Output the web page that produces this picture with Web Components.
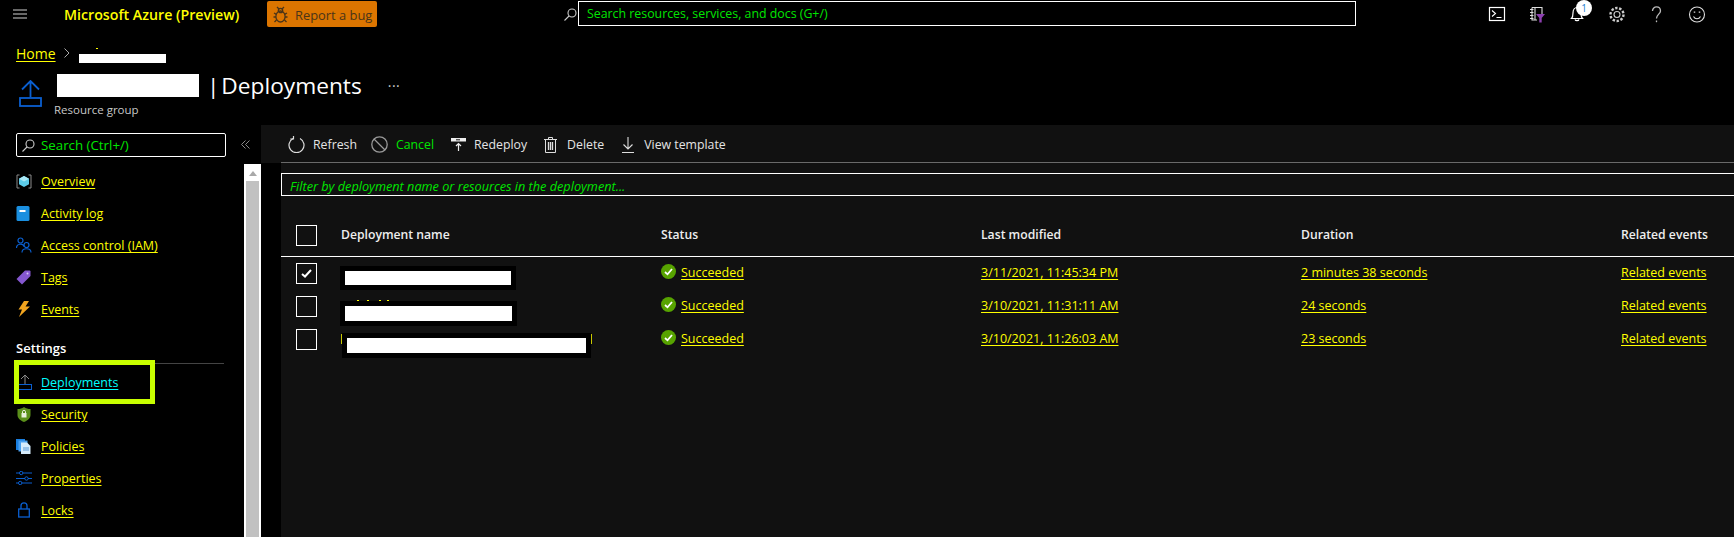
<!doctype html>
<html lang="en">
<meta charset="utf-8">
<title>Deployments</title>
<style>
    html, body { margin: 0; height: 100%; background: #000; overflow: hidden; }
    body { font: 12.5px "Open Sans", "Noto Sans", sans-serif; color: #fff; }
    svg { flex: none; }
</style>

<template id="az-link-template">
    <style>
        :host { display: inline; }
        a { color: #ff0; text-decoration: underline; text-underline-offset: 2px; cursor: pointer; }
        :host([current]) a { color: #0ff; }
    </style>
    <a><slot></slot></a>
</template>

<template id="az-topbar-template">
    <style>
        :host { display: flex; align-items: flex-start; height: 40px; box-sizing: border-box; padding-top: 1px; }
        .menu { width: 64px; height: 26px; display: flex; align-items: center; padding-left: 13px; box-sizing: border-box; }
        .brand { width: 203px; height: 28px; line-height: 28px; color: #ff0; font-size: 14.2px; font-weight: 600; }
        .bug { width: 110px; height: 26px; box-sizing: border-box; background: #dc7500; border-radius: 2px; color: #4a3418; display: flex; align-items: center; gap: 7px; padding: 1px 0 0 6px; font-size: 12.9px; }
        .find { width: 14px; margin-left: 187px; height: 26px; display: flex; align-items: center; }
        .search { width: 778px; height: 25px; box-sizing: border-box; border: 1px solid #fff; color: #00e600; padding-left: 8px; line-height: 23px; font-size: 12.35px; }
        .icons { display: flex; margin: -1px 0 0 132px; height: 28px; align-items: center; }
    </style>
    <div class="menu"><slot name="menu"></slot></div>
    <div class="brand">Microsoft Azure (Preview)</div>
    <div class="bug"><slot name="bug"></slot>Report a bug</div>
    <div class="find"><slot name="find"></slot></div>
    <div class="search">Search resources, services, and docs (G+/)</div>
    <div class="icons"><slot name="icons"></slot></div>
</template>

<template id="az-bell-badge-template">
    <style>
        :host { display: block; position: relative; width: 40px; height: 24px; }
        .badge { position: absolute; left: 8px; top: -2px; width: 16px; height: 16px; border-radius: 50%; background: #fff; color: #1b7fd0; font-size: 10px; line-height: 16px; text-align: center; }
    </style>
    <slot></slot>
    <span class="badge">1</span>
</template>

<template id="az-page-header-template">
    <style>
        :host { display: block; height: 85px; }
        .crumbs { display: flex; align-items: center; height: 26px; padding-left: 16px; font-size: 14px; }
        .crumbs ::slotted(svg) { margin: 0 2px 0 8px; }
        .mask { width: 87px; height: 9px; background: #fff; margin: 11px 0 0 7px; position: relative; }
        .mask::before { content: ""; position: absolute; left: 17px; top: -6px; width: 2px; height: 1px; background: #ff0; }
        .title { display: flex; height: 59px; }
        .pic { width: 57px; padding: 14px 0 0 19px; box-sizing: border-box; }
        .pic ::slotted(svg) { display: block; }
        .text { display: flex; flex-direction: column; }
        .line { display: flex; align-items: center; height: 38px; font-size: 22.7px; word-spacing: -4px; }
        .name { width: 142px; height: 23px; background: #fff; margin-right: 8px; }
        .more { margin-left: 26px; font-size: 14px; color: #ccc; position: relative; top: -4px; letter-spacing: .5px; }
        .sub { font-size: 11.5px; color: #c8c8c8; margin-left: -3px; line-height: 14px; position: relative; top: -1px; }
    </style>
    <div class="crumbs"><slot name="home"></slot><slot name="chevron"></slot><div class="mask"></div></div>
    <div class="title">
        <div class="pic"><slot name="icon"></slot></div>
        <div class="text">
            <div class="line"><div class="name"></div><span>| Deployments</span><span class="more">...</span></div>
            <div class="sub">Resource group</div>
        </div>
    </div>
</template>

<template id="az-sidebar-template">
    <style>
        :host { display: flex; flex-direction: column; width: 261px; flex: none; }
        .top { display: flex; height: 39px; box-sizing: border-box; padding: 8px 0 0 16px; }
        .search { width: 210px; height: 24px; box-sizing: border-box; border: 1px solid #fff; border-radius: 2px; display: flex; align-items: center; gap: 6px; padding-left: 5px; color: #00e600; font-size: 13.3px; }
        .collapse { display: flex; margin: 7px 0 0 15px; height: 9px; }
        .body { display: flex; flex: 1; min-height: 0; }
        nav { width: 244px; padding-top: 1px; box-sizing: border-box; }
        .settings { height: 39px; box-sizing: border-box; margin: 0 20px 2px 16px; border-bottom: 1px solid #444; padding-top: 14px; line-height: 18px; font-weight: 600; font-size: 13px; }
    </style>
    <div class="top">
        <div class="search"><slot name="search-icon"></slot>Search (Ctrl+/)</div>
        <div class="collapse"><slot name="collapse"></slot></div>
    </div>
    <div class="body">
        <nav>
            <slot name="overview"></slot>
            <div class="settings">Settings</div>
            <slot name="settings"></slot>
        </nav>
        <az-scrollbar></az-scrollbar>
    </div>
</template>

<template id="az-scrollbar-template">
    <style>
        :host { display: block; width: 17px; flex: none; box-sizing: border-box; background: #fff; padding: 0 2px; position: relative; }
        .thumb { background: #c1c1c1; position: absolute; top: 17px; left: 2px; right: 2px; bottom: 0; }
        .arrow { position: absolute; left: 5px; top: 7px; border: 4px solid transparent; border-top: 0; border-bottom: 5px solid #a9a9a9; }
    </style>
    <div class="arrow"></div>
    <div class="thumb"></div>
</template>

<template id="az-nav-item-template">
    <style>
        :host { display: flex; align-items: center; height: 32px; padding-left: 16px; position: relative; }
        .icon { width: 25px; height: 16px; display: flex; align-items: center; }
        :host([highlight])::after { content: ""; position: absolute; left: 14px; top: -6px; width: 141px; height: 44px; box-sizing: border-box; border: 5px solid #c8ff00; }
    </style>
    <div class="icon"><slot name="icon"></slot></div>
    <slot></slot>
</template>

<template id="az-toolbar-template">
    <style>
        :host { display: block; height: 38px; background: #111; padding-left: 20px; }
        .row { display: flex; align-items: center; height: 38px; box-sizing: border-box; padding: 2px 0 0 7px; border-bottom: 1px solid #6a6a6a; font-size: 12.3px; }
    </style>
    <div class="row"><slot></slot></div>
</template>

<template id="az-tool-button-template">
    <style>
        :host { display: flex; align-items: center; gap: var(--gap, 8px); margin-right: var(--after, 16px); color: #e4e4e4; }
        :host([accent]) { color: #00e600; }
    </style>
    <slot name="icon"></slot><span><slot></slot></span>
</template>

<template id="az-filter-template">
    <style>
        :host { display: block; height: 23px; box-sizing: border-box; border: 1px solid #fff; border-right: 0; margin-top: 10px; padding-left: 8px; line-height: 24px; color: #00e600; font-style: italic; font-size: 12.7px; }
    </style>
    <slot></slot>
</template>

<template id="az-table-template">
    <style>
        :host { display: block; margin-top: 19px; }
    </style>
    <slot></slot>
</template>

<template id="az-row-template">
    <style>
        :host { display: grid; grid-template-columns: 60px 320px 320px 320px 320px 1fr; align-items: center; height: 33px; }
        :host([head]) { height: 42px; border-bottom: 1px solid #fff; box-sizing: border-box; font-weight: 600; color: #eee; font-size: 12.2px; }
        .box { width: 21px; height: 21px; box-sizing: border-box; border: 1px solid #fff; margin-left: 15px; display: flex; align-items: center; justify-content: center; }
        .cell { display: flex; align-items: center; gap: 5px; white-space: nowrap; padding-bottom: 2px; }
    </style>
    <div class="box"><slot name="check"></slot></div>
    <div class="cell"><slot name="name"></slot></div>
    <div class="cell"><slot name="status"></slot></div>
    <div class="cell"><slot name="modified"></slot></div>
    <div class="cell"><slot name="duration"></slot></div>
    <div class="cell"><slot name="events"></slot></div>
</template>

<template id="az-redaction-template">
    <style>
        :host { display: block; position: relative; top: var(--y, 0); height: var(--h, 25px); width: var(--w); margin-left: var(--x, -1px); background: #000; }
        :host::after { content: ""; position: absolute; inset: 5px; background: #fff; }
        :host([dots])::before { content: ""; position: absolute; left: 17px; top: -1px; width: 2px; height: 1px; background: #ff0; box-shadow: 10px 0 #ff0, 22px 0 #ff0, 30px 0 #ff0; }
        :host([edges])::before { content: ""; position: absolute; left: -1px; top: 1px; width: 1px; height: 10px; background: #c8c800; box-shadow: 250px 0 #c8c800; }
    </style>
</template>

<az-topbar>
    <svg slot="menu" width="14" height="10" viewBox="0 0 14 10"><path d="M0 1h14M0 5h14M0 9h14" stroke="#8a8a8a" stroke-width="1.600"/></svg>
    <svg slot="bug" width="15" height="17" viewBox="0 0 15 17" fill="none" stroke="#4a3418" stroke-width="1.300"><ellipse cx="7.500" cy="10.500" rx="4.600" ry="5.500"/><circle cx="7.500" cy="4.500" r="2.200"/><path d="M4 1l2 2M11 1L9 3M1 7l2.400 1.400M14 7l-2.400 1.400M.5 11H3M14.500 11H12M1.500 16l2-2M13.500 16l-2-2"/></svg>
    <svg slot="find" width="13" height="13" viewBox="0 0 13 13" fill="none" stroke="#ccc" stroke-width="1.100"><circle cx="8" cy="5" r="4"/><path d="M5 8l-4.500 4.500"/></svg>
    <svg slot="icons" width="40" height="24" viewBox="0 0 40 24" fill="none" stroke="#fff"><rect x="1.500" y="5.500" width="15" height="13" stroke-width="1.200"/><path d="M4 8.500l3.500 3-3.500 3M8.500 15.500h5" stroke-width="1.100"/></svg>
    <svg slot="icons" width="40" height="24" viewBox="0 0 40 24" fill="none"><path d="M4 5.500h10v8M4 5.500v12.500h5M2 7.500h3.500M2 10.500h3.500M2 13.500h3.500M2 16.500h3.500M7 5.500v12" stroke="#ddd" stroke-width="1.100"/><path d="M8 12h9l-3.300 4v4.500h-2.400V16z" fill="#8d3fb0"/></svg>
    <az-bell-badge slot="icons">
        <svg width="40" height="24" viewBox="0 0 40 24" fill="none" stroke="#fff" stroke-width="1.200"><path d="M3.500 16.500c1.500-1.500 1.500-3 1.500-5.500 0-3.500 2-5.500 4-5.500s4 2 4 5.500c0 2.500 0 4 1.500 5.500zM7 17.500c.5 1.500 3.500 1.500 4 0"/></svg>
    </az-bell-badge>
    <svg slot="icons" width="41" height="24" viewBox="0 0 41 24" fill="none" stroke="#ccc"><circle cx="9" cy="12.500" r="3" stroke-width="1.100"/><circle cx="9" cy="12.500" r="6.500" stroke-width="2.400" stroke-dasharray="2.400 1.600"/></svg>
    <svg slot="icons" width="38" height="24" viewBox="0 0 38 24" fill="none" stroke="#bbb" stroke-width="1.300"><path d="M3.500 9c0-5.500 8-5.500 8 0 0 3-4 3.500-4 7.500"/><path d="M7.500 18.500v1.700"/></svg>
    <svg slot="icons" width="20" height="24" viewBox="0 0 20 24" fill="none" stroke="#ddd" stroke-width="1.100"><circle cx="10" cy="12.500" r="7.500"/><path d="M6.500 14.500c1.500 3 5.500 3 7 0"/><path d="M7.500 9.500v1.200M12.500 9.500v1.200" stroke-width="1.500"/></svg>
</az-topbar>

<az-page-header>
    <az-link slot="home">Home</az-link>
    <svg slot="chevron" width="6" height="10" viewBox="0 0 6 10" fill="none" stroke="#aaa"><path d="M.5.500l4.500 4.500-4.500 4.500"/></svg>
    <svg slot="icon" width="23" height="27" viewBox="0 0 23 27" fill="none" stroke="#0a5fd0" stroke-width="1.800"><path d="M11.500 17V1.500M3 9.500l8.500-8.500 8.500 8.500"/><rect x="1" y="18" width="21" height="8"/></svg>
</az-page-header>

<az-workspace>
    <az-sidebar>
        <svg slot="search-icon" width="13" height="13" viewBox="0 0 13 13" fill="none" stroke="#ccc" stroke-width="1.100"><circle cx="8" cy="5" r="4"/><path d="M5 8l-4.500 4.500"/></svg>
        <svg slot="collapse" width="9" height="9" viewBox="0 0 9 9" fill="none" stroke="#8a8a8a"><path d="M4.500.500l-4 4 4 4M8.500.500l-4 4 4 4"/></svg>

        <az-nav-item slot="overview">
            <svg slot="icon" width="16" height="15" viewBox="0 0 16 15"><path d="M3.500 1H1v13h2.500M12.500 1H15v13h-2.500" fill="none" stroke="#8a8a8a"/><path d="M8 2l5 2.700v5.600L8 13l-5-2.700V4.700z" fill="#5ccbe8"/><path d="M8 7.500l5-2.800L8 2 3 4.700z" fill="#a8e8f6"/></svg>
            <az-link>Overview</az-link>
        </az-nav-item>
        <az-nav-item slot="overview">
            <svg slot="icon" width="14" height="15" viewBox="0 0 14 15"><rect width="13" height="15" x=".5" rx="1.500" fill="#1a8fe0"/><rect x="3.500" y="4" width="6" height="2" fill="#fff"/></svg>
            <az-link>Activity log</az-link>
        </az-nav-item>
        <az-nav-item slot="overview">
            <svg slot="icon" width="16" height="16" viewBox="0 0 16 16" fill="none" stroke="#0a5fd0" stroke-width="1.200"><circle cx="4.500" cy="3.500" r="2.500"/><path d="M.5 11c0-4.500 6.500-5 7.500-1.500"/><circle cx="10.500" cy="8" r="2.500"/><path d="M6 15.500c0-5 9-5 9 0"/></svg>
            <az-link>Access control (IAM)</az-link>
        </az-nav-item>
        <az-nav-item slot="overview">
            <svg slot="icon" width="15" height="15" viewBox="0 0 15 15"><path d="M9 .5h4.500a1 1 0 0 1 1 1V6L6 14.500l-5.500-5.500z" fill="#8557cf"/><circle cx="11.500" cy="3.500" r="1" fill="#d9c8f3"/></svg>
            <az-link>Tags</az-link>
        </az-nav-item>
        <az-nav-item slot="overview">
            <svg slot="icon" width="12" height="16" viewBox="0 0 12 16" style="margin-left:2px"><path d="M6 0h5L7.500 5.500H12L1 16l3-7.500H.5z" fill="#f2a51f"/></svg>
            <az-link>Events</az-link>
        </az-nav-item>

        <az-nav-item slot="settings" highlight>
            <svg slot="icon" width="14" height="16" viewBox="0 0 14 16" fill="none" style="margin-left:2px"><path d="M7 10V1M3 5l4-4 4 4" stroke="#8a8a8a"/><rect x=".5" y="10.500" width="13" height="5" stroke="#0a5fd0"/></svg>
            <az-link current>Deployments</az-link>
        </az-nav-item>
        <az-nav-item slot="settings">
            <svg slot="icon" width="14" height="15" viewBox="0 0 14 15" style="margin-left:1px"><path d="M7 0c2 1.500 4 2 6.500 2v6c0 3.500-3 5.500-6.500 7C3.500 13.500.5 11.500.5 8V2C3 2 5 1.500 7 0z" fill="#5a8f1a"/><rect x="4.500" y="6" width="5" height="4.500" fill="#e8f0dc"/><path d="M5.500 6V4.800a1.500 1.500 0 0 1 3 0V6" fill="none" stroke="#e8f0dc"/></svg>
            <az-link>Security</az-link>
        </az-nav-item>
        <az-nav-item slot="settings">
            <svg slot="icon" width="15" height="15" viewBox="0 0 15 15"><rect width="9" height="11" fill="#1a7fe0"/><rect x="2.500" y="1.500" width="9" height="11" fill="#4aa0f0"/><path d="M5 3.500h6l3.500 3.500v8H5z" fill="#d6ebfb"/><path d="M7 9h6M7 11h6" stroke="#5a9ad8"/></svg>
            <az-link>Policies</az-link>
        </az-nav-item>
        <az-nav-item slot="settings">
            <svg slot="icon" width="16" height="14" viewBox="0 0 16 14" fill="none" stroke="#0a5fd0"><path d="M0 2h3.500M7 2h9M0 7.500h9M12 7.500h4M0 12h2.500M6 12h10"/><circle cx="5.200" cy="2" r="1.700"/><circle cx="10.500" cy="7.500" r="1.700"/><circle cx="4.200" cy="12" r="1.700"/></svg>
            <az-link>Properties</az-link>
        </az-nav-item>
        <az-nav-item slot="settings">
            <svg slot="icon" width="14" height="16" viewBox="0 0 14 16" fill="none" stroke="#0a5fd0" stroke-width="1.300" style="margin-left:1px"><rect x="1.700" y="7" width="10.600" height="8"/><path d="M4 7V3.800a3 3 0 0 1 6 0V7"/></svg>
            <az-link>Locks</az-link>
        </az-nav-item>
    </az-sidebar>

    <az-main>
        <az-toolbar>
            <az-tool-button style="--gap:8px;--after:14px">
                <svg slot="icon" width="17" height="17" viewBox="0 0 17 17" fill="none" stroke="#ddd" stroke-width="1.200"><path d="M5 2.500a7.500 7.500 0 1 0 7 0"/><path d="M5.500 0v3H2.300"/></svg>Refresh
            </az-tool-button>
            <az-tool-button accent style="--gap:8px;--after:17px">
                <svg slot="icon" width="17" height="17" viewBox="0 0 17 17" fill="none" stroke="#9a9a9a" stroke-width="1.300"><circle cx="8.500" cy="8.500" r="7.700"/><path d="M3 3l11 11"/></svg>Cancel
            </az-tool-button>
            <az-tool-button style="--gap:8px;--after:17px">
                <svg slot="icon" width="15" height="15" viewBox="0 0 15 15"><path d="M0 1h15v3.500H0z" fill="#eee"/><path d="M5 2.700h4" stroke="#555" stroke-width="1.500"/><path d="M7.500 14V7M5 9l2.500-2.500L10 9" fill="none" stroke="#eee" stroke-width="1.200"/></svg>Redeploy
            </az-tool-button>
            <az-tool-button style="--gap:10px;--after:18px">
                <svg slot="icon" width="13" height="16" viewBox="0 0 13 16" fill="none" stroke="#ddd"><path d="M0 2.500h13M4.500 2.500V.5h4v2M1.500 2.500v13h10v-13"/><path d="M4.500 5v8M6.500 5v8M8.500 5v8" stroke-width="1.300"/></svg>Delete
            </az-tool-button>
            <az-tool-button style="--gap:10px;--after:0">
                <svg slot="icon" width="12" height="16" viewBox="0 0 12 16" fill="none" stroke="#ddd" stroke-width="1.100"><path d="M6 0v11.500M1.500 7.500L6 12l4.500-4.500M0 15.500h12"/></svg>View template
            </az-tool-button>
        </az-toolbar>
        <az-panel>
            <az-filter>Filter by deployment name or resources in the deployment...</az-filter>
            <az-table>
                <az-row head>
                    <span slot="name">Deployment name</span>
                    <span slot="status">Status</span>
                    <span slot="modified">Last modified</span>
                    <span slot="duration">Duration</span>
                    <span slot="events">Related events</span>
                </az-row>
                <az-row>
                    <svg slot="check" width="11" height="9" viewBox="0 0 11 9" fill="none" stroke="#fff" stroke-width="2"><path d="M1 5l3 2.500L10 1"/></svg>
                    <az-redaction slot="name" style="--w:176px;--h:24px;--y:5.500px"></az-redaction>
                    <az-status slot="status">Succeeded</az-status>
                    <az-link slot="modified">3/11/2021, 11:45:34 PM</az-link>
                    <az-link slot="duration">2 minutes 38 seconds</az-link>
                    <az-link slot="events">Related events</az-link>
                </az-row>
                <az-row>
                    <az-redaction slot="name" dots style="--w:177px;--y:8px"></az-redaction>
                    <az-status slot="status">Succeeded</az-status>
                    <az-link slot="modified">3/10/2021, 11:31:11 AM</az-link>
                    <az-link slot="duration">24 seconds</az-link>
                    <az-link slot="events">Related events</az-link>
                </az-row>
                <az-row>
                    <az-redaction slot="name" edges style="--w:249px;--x:1px;--y:7px"></az-redaction>
                    <az-status slot="status">Succeeded</az-status>
                    <az-link slot="modified">3/10/2021, 11:26:03 AM</az-link>
                    <az-link slot="duration">23 seconds</az-link>
                    <az-link slot="events">Related events</az-link>
                </az-row>
            </az-table>
        </az-panel>
    </az-main>
</az-workspace>

<template id="az-status-template">
    <style>
        :host { display: flex; align-items: center; gap: 5px; }
        svg { display: block; position: relative; top: -1px; }
    </style>
    <svg width="15" height="15" viewBox="0 0 15 15"><circle cx="7.500" cy="7.500" r="7.500" fill="#57a300"/><path d="M4 8l2.500 2.300L11 5" fill="none" stroke="#fff" stroke-width="1.800"/></svg>
    <az-link><slot></slot></az-link>
</template>

<template id="az-workspace-template">
    <style>
        :host { display: flex; height: 412px; overflow: hidden; }
    </style>
    <slot></slot>
</template>

<template id="az-main-template">
    <style>
        :host { display: flex; flex-direction: column; flex: 1; min-width: 0; }
    </style>
    <slot></slot>
</template>

<template id="az-panel-template">
    <style>
        :host { display: flow-root; flex: 1; margin-left: 20px; background: #111; }
    </style>
    <slot></slot>
</template>

<script>
    // every element is the same thing: clone its template into an open shadow root
    const names = ["az-link", "az-topbar", "az-bell-badge", "az-page-header", "az-sidebar", "az-scrollbar",
        "az-nav-item", "az-toolbar", "az-tool-button", "az-filter", "az-table", "az-row", "az-redaction",
        "az-status", "az-workspace", "az-main", "az-panel"];
    for (const name of names) {
        customElements.define(name, class extends HTMLElement {
            constructor() {
                super();
                const template = document.getElementById(name + "-template");
                this.attachShadow({ mode: "open" }).appendChild(template.content.cloneNode(true));
            }
        });
    }
</script>
</html>
